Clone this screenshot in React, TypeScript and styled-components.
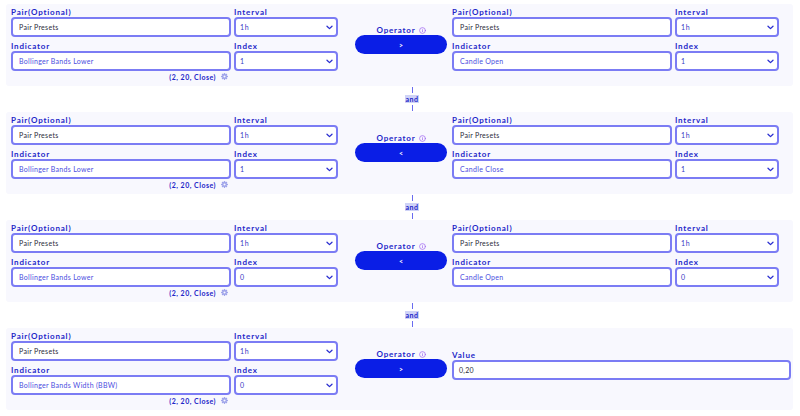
import styled, { createGlobalStyle } from "styled-components";
import { Info } from "lucide-react";

type Side = {
  pair: string;
  interval: string;
  indicator: string;
  index: string;
  params?: string;
};

type Condition = {
  left: Side;
  operator: string;
  right?: Side;
  value?: string;
};

const bbLower = (index: string): Side => ({
  pair: "Pair Presets",
  interval: "1h",
  indicator: "Bollinger Bands Lower",
  index,
  params: "(2, 20, Close)",
});

const candle = (indicator: string, index: string): Side => ({
  pair: "Pair Presets",
  interval: "1h",
  indicator,
  index,
});

const conditions: Condition[] = [
  { left: bbLower("1"), operator: ">", right: candle("Candle Open", "1") },
  { left: bbLower("1"), operator: "<", right: candle("Candle Close", "1") },
  { left: bbLower("0"), operator: "<", right: candle("Candle Open", "0") },
  {
    left: {
      pair: "Pair Presets",
      interval: "1h",
      indicator: "Bollinger Bands Width (BBW)",
      index: "0",
      params: "(2, 20, Close)",
    },
    operator: ">",
    value: "0,20",
  },
];

function Chevron() {
  return (
    <svg width="7" height="5" viewBox="0 0 7 5" fill="none">
      <path d="M1 1.2 L3.5 3.6 L6 1.2" stroke="#2b2fd0" strokeWidth="1.3" strokeLinecap="round" strokeLinejoin="round" />
    </svg>
  );
}

function Gear() {
  return (
    <svg width="7" height="7" viewBox="0 0 10 10">
      <g fill="#9ea3ea">
        <circle cx="5" cy="5" r="3.4" />
        <rect x="4" y="0" width="2" height="10" rx="0.6" />
        <rect x="0" y="4" width="10" height="2" rx="0.6" />
        <rect x="4" y="0" width="2" height="10" rx="0.6" transform="rotate(45 5 5)" />
        <rect x="4" y="0" width="2" height="10" rx="0.6" transform="rotate(-45 5 5)" />
      </g>
      <circle cx="5" cy="5" r="1.5" fill="#f8f8fe" />
    </svg>
  );
}

function SideFields({ side }: { side: Side }) {
  return (
    <SideGrid>
      <Field>
        <Label>Pair(Optional)</Label>
        <TextBox $tone="dark">{side.pair}</TextBox>
      </Field>
      <Field>
        <Label>Interval</Label>
        <SelectBox>
          <span>{side.interval}</span>
          <Chevron />
        </SelectBox>
      </Field>
      <Field>
        <Label>Indicator</Label>
        <TextBox $tone="blue">{side.indicator}</TextBox>
        {side.params && (
          <Hint>
            <span>{side.params}</span>
            <Gear />
          </Hint>
        )}
      </Field>
      <Field>
        <Label>Index</Label>
        <SelectBox>
          <span>{side.index}</span>
          <Chevron />
        </SelectBox>
      </Field>
    </SideGrid>
  );
}

export default function App() {
  return (
    <>
      <GlobalStyle />
      <Page>
        {conditions.map((c, i) => (
          <div key={i}>
            {i > 0 && (
              <Connector>
                <ConnLine />
                <AndTag>and</AndTag>
                <ConnLine />
              </Connector>
            )}
            <Panel>
              <SideFields side={c.left} />
              <OperatorCol>
                <OpLabel>
                  Operator <Info size={7} strokeWidth={2.6} color="#a46cf2" />
                </OpLabel>
                <OpButton>{c.operator}</OpButton>
              </OperatorCol>
              {c.right ? (
                <SideFields side={c.right} />
              ) : (
                <ValueCol>
                  <Label>Value</Label>
                  <ValueBox $tone="dark">{c.value}</ValueBox>
                </ValueCol>
              )}
            </Panel>
          </div>
        ))}
      </Page>
    </>
  );
}

const GlobalStyle = createGlobalStyle`
  body {
    margin: 0;
    background: #ffffff;
  }
  * {
    box-sizing: border-box;
  }
`;

const Page = styled.div`
  padding: 4px 7px 0 6px;
  font-family: Lato, "Noto Sans", sans-serif;
`;

const Panel = styled.div`
  display: grid;
  grid-template-columns: 327px 114px 1fr;
  height: 82px;
  padding: 3px 0 0 5px;
  background: #f8f8fe;
  border-radius: 3px;
`;

const SideGrid = styled.div`
  display: grid;
  grid-template-columns: 220px 104px;
  column-gap: 3px;
  row-gap: 4px;
  align-content: start;
`;

const Field = styled.div`
  display: flex;
  flex-direction: column;
`;

const Label = styled.div`
  font-size: 8px;
  font-weight: 700;
  line-height: 10px;
  letter-spacing: 0.8px;
  color: #2326c8;
`;

const TextBox = styled.div<{ $tone: "dark" | "blue" }>`
  display: flex;
  align-items: center;
  height: 20px;
  padding: 0 6px;
  background: #ffffff;
  border: 2px solid #7b7cf4;
  border-radius: 4px;
  font-size: 7px;
  letter-spacing: 0.3px;
  color: ${({ $tone }) => ($tone === "dark" ? "#2b2b3a" : "#4a4de0")};
  white-space: nowrap;
`;

const SelectBox = styled.div`
  display: flex;
  align-items: center;
  justify-content: space-between;
  height: 20px;
  padding: 0 3px 0 4px;
  background: #ffffff;
  border: 2px solid #7b7cf4;
  border-radius: 4px;
  font-size: 7px;
  letter-spacing: 0.6px;
  color: #3437c4;
`;

const Hint = styled.div`
  display: flex;
  justify-content: flex-end;
  align-items: center;
  gap: 5px;
  height: 9px;
  margin-top: 1px;
  padding-right: 3px;
  font-size: 7px;
  font-weight: 700;
  letter-spacing: 0.5px;
  color: #2326c8;
`;

const OperatorCol = styled.div`
  display: flex;
  flex-direction: column;
  align-items: center;
  width: 92px;
  margin-left: 17px;
  padding-top: 18px;
`;

const OpLabel = styled.div`
  display: flex;
  align-items: center;
  gap: 3px;
  height: 10px;
  font-size: 8px;
  font-weight: 700;
  letter-spacing: 0.8px;
  color: #2326c8;
`;

const OpButton = styled.div`
  display: flex;
  align-items: center;
  justify-content: center;
  width: 92px;
  height: 19px;
  border-radius: 10px;
  background: #0a1ee6;
  color: #ffffff;
  font-size: 7px;
  font-weight: 700;
`;

const ValueCol = styled.div`
  display: flex;
  flex-direction: column;
  width: 339px;
  padding-top: 19px;
`;

const ValueBox = styled(TextBox)`
  padding: 0 5px;
`;

const Connector = styled.div`
  display: flex;
  flex-direction: column;
  align-items: center;
  gap: 2px;
  height: 26px;
  padding: 1px 0 0 25px;
`;

const ConnLine = styled.div`
  width: 1px;
  height: 6px;
  background: #6a6cf0;
`;

const AndTag = styled.div`
  padding: 0 1px;
  background: #cfd3f7;
  font-size: 7px;
  font-weight: 700;
  line-height: 8px;
  letter-spacing: 0.5px;
  color: #2326c8;
`;
